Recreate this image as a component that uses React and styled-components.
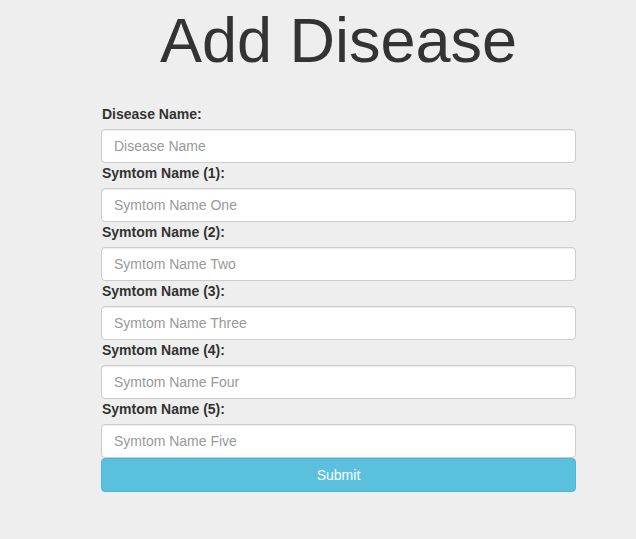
import styled, { createGlobalStyle } from "styled-components";

/* ---------------- css ---------------- */
const GlobalStyle = createGlobalStyle`
  * { box-sizing: border-box; }
  html, body {
    margin: 0;
    padding: 0;
    background-color: #eeeeee;
    font-family: "Liberation Sans", Arial, Helvetica, sans-serif;
    font-size: 14px;
    line-height: 1.42857;
    color: #333;
  }
`;

const Page = styled.div`
  padding: 0 60px 40px 101px;
`;

const Title = styled.h1`
  margin: 6px 0 29px;
  font-size: 63px;
  font-weight: 400;
  line-height: 1.1;
  text-align: center;
  color: #333;
`;

const Form = styled.form`
  display: flex;
  flex-direction: column;
  width: 475px;
`;

const Label = styled.label`
  display: block;
  margin: 0 0 5px 1px;
  font-weight: 700;
  line-height: 20px;
`;

const Input = styled.input`
  display: block;
  width: 100%;
  height: 34px;
  padding: 6px 12px;
  font-family: inherit;
  font-size: 14px;
  color: #555;
  background-color: #fff;
  border: 1px solid #ccc;
  border-radius: 4px;
  box-shadow: inset 0 1px 1px rgba(0, 0, 0, 0.075);
  outline: none;

  &::placeholder {
    color: #999;
  }
`;

const Button = styled.button`
  display: block;
  width: 100%;
  height: 34px;
  padding: 6px 12px;
  font-family: inherit;
  font-size: 14px;
  color: #fff;
  background-color: #5bc0de;
  border: 1px solid #46b8da;
  border-radius: 4px;
  cursor: pointer;
`;

/* ---------------- data ---------------- */
const fields = [
  { label: "Disease Name:", placeholder: "Disease Name" },
  { label: "Symtom Name (1):", placeholder: "Symtom Name One" },
  { label: "Symtom Name (2):", placeholder: "Symtom Name Two" },
  { label: "Symtom Name (3):", placeholder: "Symtom Name Three" },
  { label: "Symtom Name (4):", placeholder: "Symtom Name Four" },
  { label: "Symtom Name (5):", placeholder: "Symtom Name Five" },
];

/* ---------------- jsx ---------------- */
const App = () => {
  return (
    <>
      <GlobalStyle />
      <Page>
        <Title>Add Disease</Title>
        <Form onSubmit={(e) => e.preventDefault()}>
          {fields.map((f, i) => (
            <div key={i}>
              <Label htmlFor={"f" + i}>{f.label}</Label>
              <Input id={"f" + i} type="text" placeholder={f.placeholder} />
            </div>
          ))}
          <Button type="submit">Submit</Button>
        </Form>
      </Page>
    </>
  );
};

export default App;
